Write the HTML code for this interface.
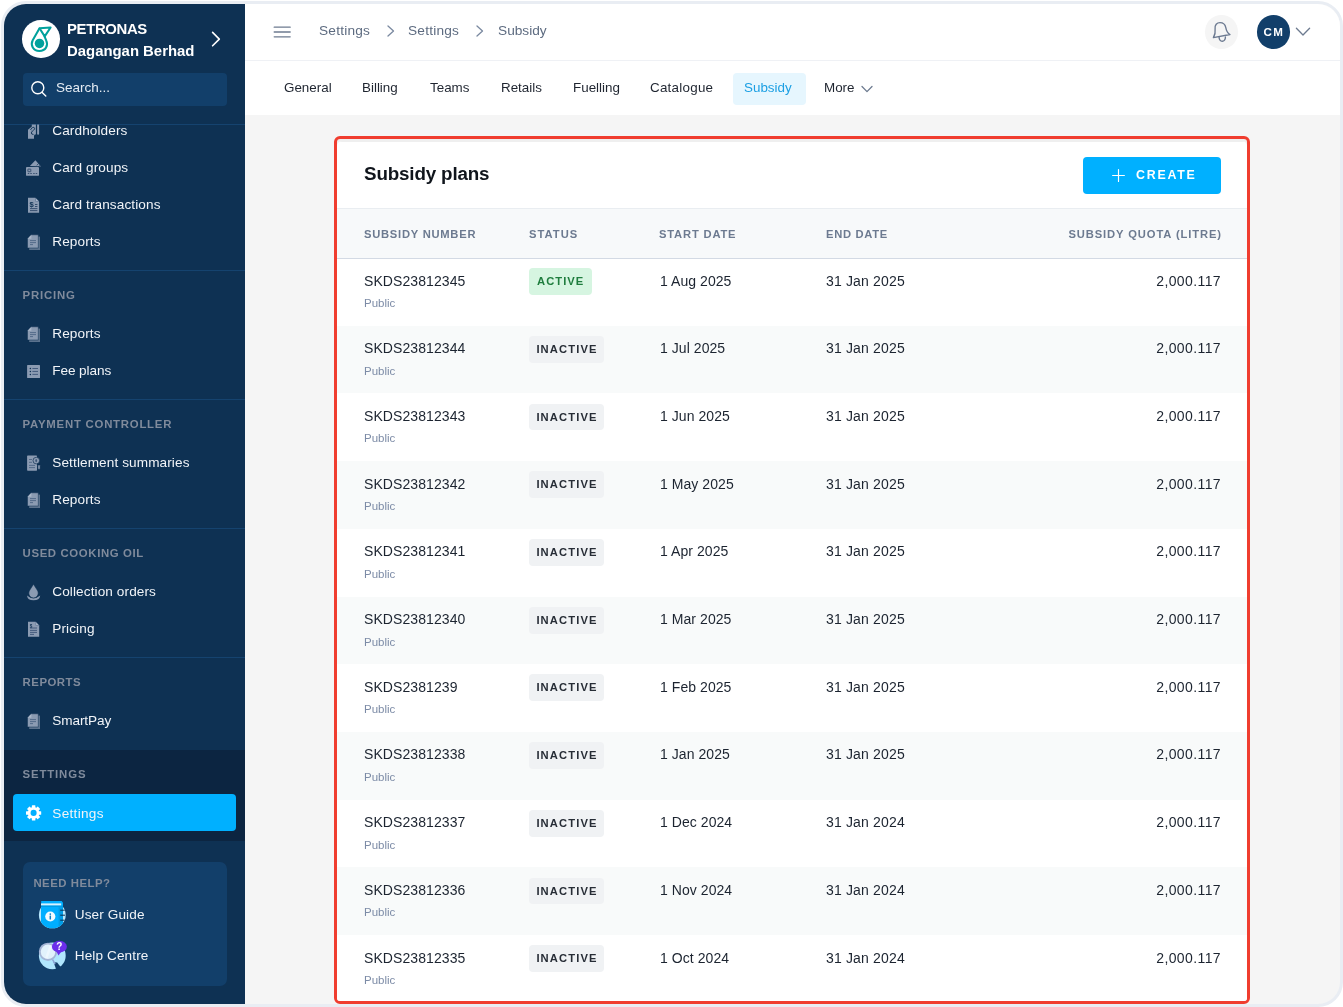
<!DOCTYPE html>
<html lang="en">
<head>
<meta charset="utf-8">
<title>Subsidy plans</title>
<style>
*{box-sizing:border-box;margin:0;padding:0}
html,body{width:1343px;height:1007px;overflow:hidden;background:#fff}
body{font-family:"Liberation Sans",sans-serif;color:#1c2430;position:relative}
.frame{position:absolute;left:1px;top:1px;width:1342px;height:1006px;border:3px solid #e9edf3;border-radius:25px;overflow:hidden;background:#f5f5f5}
.page{position:absolute;left:-4px;top:-4px;width:1343px;height:1007px;will-change:transform}
.abs{position:absolute}
.t{position:absolute;white-space:nowrap;line-height:20px;height:20px;margin-top:-10px}
/* sidebar */
.side{position:absolute;left:4px;top:4px;width:241px;height:1000px;background:#0e3153}
.sep{position:absolute;left:4px;width:241px;height:1px;background:#15436f}
.lab{font-size:11.4px;font-weight:700;letter-spacing:.95px;color:#808b9c;left:22.6px}
.it{font-size:13.6px;letter-spacing:.1px;color:#f1f4f8;left:52.3px;margin-top:-9.6px}
.ico{position:absolute;left:25px;width:16px;height:16px;margin-top:-8px}
.brand{font-size:14.9px;font-weight:700;color:#fff}
/* main */
.hdr{position:absolute;left:245px;top:4px;width:1095px;height:57px;background:#fff;border-bottom:1px solid #eff1f5}
.tabs{position:absolute;left:245px;top:61px;width:1095px;height:54px;background:#fff}
.bc{font-size:13.7px;letter-spacing:.2px;color:#5d6b80;margin-top:-10.7px}
.tab{font-size:13.4px;color:#1f2530;margin-top:-10.3px}

.card{position:absolute;left:334px;top:136px;width:916px;height:868px;border:3px solid #f03d2f;border-radius:6px;background:#efefef;overflow:hidden}
.cin{position:absolute;left:0;top:2px;width:910px;height:870px;background:#fff;border-radius:5px 5px 0 0;overflow:hidden}
.th{font-size:11.2px;font-weight:700;letter-spacing:1.02px;color:#6c7a90;margin-top:-10.4px}
.row{position:absolute;left:0;width:910px;height:67.7px}
.row.alt{background:#f8fafa}
.c1{font-size:14px;color:#1c2430;letter-spacing:.08px;margin-top:-11px}
.sub{font-size:11.5px;color:#7c8ba6;margin-top:-11px}
.c{font-size:14px;color:#1c2430;letter-spacing:.06px;margin-top:-11px}
.e{letter-spacing:.16px}
.q{letter-spacing:.39px}
.bdg{position:absolute;left:192px;top:10.3px;height:26.8px;border-radius:4px;background:#f0f2f4;color:#272d36;font-size:11.2px;font-weight:700;letter-spacing:1.12px;line-height:26.8px;padding:0 0 0 7.4px;white-space:nowrap}
.bdg.on{background:#d6f5e1;color:#1f7d3e;letter-spacing:1.05px;padding-left:8px}
</style>
</head>
<body>
<div class="frame"><div class="page">

<!-- SIDEBAR -->

<div class="side"></div>
<!-- brand -->
<div class="abs" style="left:22.4px;top:20.3px;width:37.6px;height:37.6px;border-radius:50%;background:#fff"></div>
<svg class="abs" style="left:29px;top:24px" width="24" height="30" viewBox="0 0 24 30">
  <path d="M10.5 4.3 L21.6 3.5 L15.7 12.4 Z" fill="none" stroke="#00a19c" stroke-width="2.05" stroke-linejoin="round"/>
  <path d="M10.4 4.6 L3.7 16.2 C1.2 21.2 4.2 26.9 10.4 26.9 C16.6 26.9 19.6 21.6 17.2 16.4 L15.6 12.6" fill="none" stroke="#00a19c" stroke-width="2.05" stroke-linecap="round" stroke-linejoin="round"/>
  <circle cx="10.5" cy="19.4" r="4.75" fill="#00a19c"/>
</svg>
<div class="t brand" style="left:67px;top:29px;letter-spacing:-0.35px">PETRONAS</div>
<div class="t brand" style="left:67px;top:50.5px">Dagangan Berhad</div>
<svg class="abs" style="left:209px;top:29px" width="14" height="20" viewBox="0 0 14 20"><path d="M3.6 3.4 L10.3 10.1 L3.6 16.8" fill="none" stroke="#fff" stroke-width="1.6" stroke-linecap="round" stroke-linejoin="round"/></svg>
<!-- search -->
<div class="abs" style="left:22.5px;top:73px;width:204px;height:32.5px;border-radius:4px;background:#123f6a"></div>
<svg class="abs" style="left:30px;top:80px" width="18" height="18" viewBox="0 0 18 18"><circle cx="7.8" cy="7.8" r="6" fill="none" stroke="#fff" stroke-width="1.4"/><path d="M12.2 12.4 L15.8 16" stroke="#fff" stroke-width="1.4" stroke-linecap="round"/></svg>
<div class="t" style="left:56px;top:88px;font-size:13.5px;color:#e4ebf3;margin-top:-10.4px">Search...</div>
<div class="sep" style="top:123.6px"></div>


<!-- nav -->
<div class="t it" style="top:130.5px">Cardholders</div>
<div class="t it" style="top:167.5px">Card groups</div>
<div class="t it" style="top:204.5px">Card transactions</div>
<div class="t it" style="top:241.5px">Reports</div>
<div class="sep" style="top:270px"></div>
<div class="t lab" style="top:295px;letter-spacing:0.8px">PRICING</div>
<div class="t it" style="top:333.5px">Reports</div>
<div class="t it" style="top:370.5px;letter-spacing:-.1px">Fee plans</div>
<div class="sep" style="top:399px"></div>
<div class="t lab" style="top:424px;letter-spacing:0.75px">PAYMENT CONTROLLER</div>
<div class="t it" style="top:462.5px">Settlement summaries</div>
<div class="t it" style="top:499.5px">Reports</div>
<div class="sep" style="top:528px"></div>
<div class="t lab" style="top:553px;letter-spacing:0.62px">USED COOKING OIL</div>
<div class="t it" style="top:591.5px">Collection orders</div>
<div class="t it" style="top:628.5px">Pricing</div>
<div class="sep" style="top:657px"></div>
<div class="t lab" style="top:682px;letter-spacing:0.5px">REPORTS</div>
<div class="t it" style="top:720.5px;letter-spacing:-.1px">SmartPay</div>
<div class="abs" style="left:4px;top:750px;width:241px;height:91px;background:#0c2541"></div>
<div class="t lab" style="top:774px;letter-spacing:0.85px">SETTINGS</div>
<div class="abs" style="left:13px;top:794px;width:223px;height:37.4px;border-radius:4px;background:#00b0ff"></div>
<div class="t it" style="top:813.5px;letter-spacing:.3px">Settings</div>

<svg class="abs" style="left:0;top:0" width="250" height="1007" viewBox="0 0 250 1007">
<defs><clipPath id="scr"><rect x="4" y="124.6" width="241" height="700"/></clipPath></defs>
<g clip-path="url(#scr)">
<!-- cardholders -->
<path d="M31.8 122 H35.9 V134.2 H31.8 Z M37.1 122 H39.1 V134 Q39.1 134.7 38.1 134.7 Q37.1 134.7 37.1 134 Z" fill="#8b9bb2"/>
<path d="M28 129.7 L31.8 126.6 V134.2 H35.9 L34 135.5 V138.7 H28 Z" fill="#8b9bb2"/>
<path d="M30.6 129.4 L32.8 127.4 Q34.2 126.8 34.6 128.2 Q34.8 129.2 33.6 130.2 L31.8 131.8 Q30.8 133 31.8 134 L33 134.3" fill="none" stroke="#0e3153" stroke-width=".9" stroke-linecap="round"/>
</g>
<!-- card groups -->
<path d="M35.4 160.2 L41 166.6 L38.2 166.2 L29.9 166 Z" fill="#8b9bb2"/>
<path d="M36.7 165.3 L38.7 163.5 M38.3 166.9 L40.4 165" stroke="#0e3153" stroke-width=".7"/>
<rect x="26" y="167" width="13" height="8.8" rx=".9" fill="#8b9bb2"/>
<rect x="27.9" y="169.1" width="2.9" height="2.6" rx=".3" fill="none" stroke="#2c4668" stroke-width=".85"/>
<path d="M27.8 173.5 H29.3 M30.3 173.5 H31.8 M33.2 173.5 H34.7 M35.7 173.5 H37.2" stroke="#2c4668" stroke-width=".9"/>
<!-- card transactions -->
<path d="M28 197.8 H35.3 L39.1 201.6 V212.7 H28 Z" fill="#8b9bb2"/>
<path d="M35.3 197.8 V201.6 H39.1 Z" fill="#5f7696"/>
<path d="M35.9 198.6 L38.4 201 H35.9 Z" fill="#a9b6c8"/>
<text x="29.6" y="206.6" font-family="Liberation Sans, sans-serif" font-size="7.6" font-weight="700" fill="#0e3153">$</text>
<path d="M35 204.5 H37.4 M35 206.5 H37.4 M30 208.6 H37.4 M30 210.6 H37.4" stroke="#2c4668" stroke-width=".9"/>
<g>
<path d="M29.2 236.60000000000002 H40 V250.0 H29.2 Z" fill="#8b9bb2" opacity=".62"/>
<path d="M31.4 234.8 H38.3 V248.0 H27.5 V238.70000000000002 Z" fill="#8b9bb2" stroke="#0e3153" stroke-width=".5"/>
<path d="M27.5 238.70000000000002 H31.4 V234.8 Z" fill="#a9b6c8"/>
<path d="M30 240.60000000000002 H36 M30 242.60000000000002 H36 M30 244.60000000000002 H33" stroke="#4d6585" stroke-width=".9"/>
</g>
<g>
<path d="M29.2 328.6 H40 V342.0 H29.2 Z" fill="#8b9bb2" opacity=".62"/>
<path d="M31.4 326.8 H38.3 V340.0 H27.5 V330.7 Z" fill="#8b9bb2" stroke="#0e3153" stroke-width=".5"/>
<path d="M27.5 330.7 H31.4 V326.8 Z" fill="#a9b6c8"/>
<path d="M30 332.6 H36 M30 334.6 H36 M30 336.6 H33" stroke="#4d6585" stroke-width=".9"/>
</g>
<!-- fee plans -->
<rect x="27.1" y="365" width="12.9" height="13" rx=".5" fill="#8b9bb2"/>
<circle cx="30.4" cy="368.5" r=".75" fill="#0e3153"/><circle cx="30.4" cy="371.45" r=".75" fill="#0e3153"/><circle cx="30.4" cy="374.4" r=".75" fill="#0e3153"/>
<path d="M32.4 368.5 H38 M32.4 371.45 H38 M32.4 374.4 H38" stroke="#3c5577" stroke-width=".9"/>
<!-- settlement summaries -->
<path d="M27.8 455.6 H36.4 Q37 455.6 37 456.2 V470.1 Q37 470.7 36.4 470.7 H27.8 Q27.1 470.7 27.1 470.1 V456.2 Q27.1 455.6 27.8 455.6 Z" fill="#8b9bb2"/>
<circle cx="36.3" cy="460.6" r="3.3" fill="#8b9bb2" stroke="#0e3153" stroke-width=".7"/>
<ellipse cx="36.2" cy="460.6" rx=".9" ry="1.7" fill="#3c5577"/>
<rect x="37.9" y="465" width="2.2" height="4.2" rx=".4" fill="#8b9bb2" stroke="#0e3153" stroke-width=".5"/>
<path d="M29 459.5 H32 M29 462.3 H32 M29 465.4 H35 M29 467.6 H35" stroke="#4d6585" stroke-width=".9"/>
<g>
<path d="M29.2 494.6 H40 V508.0 H29.2 Z" fill="#8b9bb2" opacity=".62"/>
<path d="M31.4 492.8 H38.3 V506.0 H27.5 V496.7 Z" fill="#8b9bb2" stroke="#0e3153" stroke-width=".5"/>
<path d="M27.5 496.7 H31.4 V492.8 Z" fill="#a9b6c8"/>
<path d="M30 498.6 H36 M30 500.6 H36 M30 502.6 H33" stroke="#4d6585" stroke-width=".9"/>
</g>
<!-- collection orders -->
<path d="M27 595.4 Q33.5 601 40.2 595.4 Q39.6 600.2 33.5 600.3 Q27.6 600.2 27 595.4 Z" fill="#8b9bb2"/>
<path d="M33.5 584.2 L37.2 590 Q38.4 592 38.2 593.2 A4.7 4.7 0 0 1 28.8 593.2 Q28.7 592 29.8 590 Z" fill="#8b9bb2" stroke="#0e3153" stroke-width=".6"/>
<!-- pricing -->
<path d="M28 621.8 H35.6 L39.2 625.4 V636.8 H28 Z" fill="#8b9bb2"/>
<path d="M35.6 621.8 V625.4 H39.2 Z" fill="#5f7696"/>
<path d="M36.1 622.6 L38.5 624.9 H36.1 Z" fill="#a9b6c8"/>
<text x="29.8" y="627.6" font-family="Liberation Sans, sans-serif" font-size="4.6" font-weight="700" fill="#0e3153">$</text>
<path d="M30 628 H37 M30 630.4 H37 M30 632.4 H37 M30 634.4 H34" stroke="#3c5577" stroke-width=".9"/>
<g>
<path d="M29.2 715.5999999999999 H40 V729.0 H29.2 Z" fill="#8b9bb2" opacity=".62"/>
<path d="M31.4 713.8 H38.3 V727.0 H27.5 V717.6999999999999 Z" fill="#8b9bb2" stroke="#0e3153" stroke-width=".5"/>
<path d="M27.5 717.6999999999999 H31.4 V713.8 Z" fill="#a9b6c8"/>
<path d="M30 719.5999999999999 H36 M30 721.5999999999999 H36 M30 723.5999999999999 H33" stroke="#4d6585" stroke-width=".9"/>
</g>
<!-- settings gear -->
<g transform="translate(33.6 812.9)" fill="#fff">
<circle r="5.8"/>
<g id="tt"><rect x="-1.75" y="-7.6" width="3.5" height="15.2" rx=".5"/><rect x="-7.6" y="-1.75" width="15.2" height="3.5" rx=".5"/></g>
<g transform="rotate(45)"><rect x="-1.75" y="-7.5" width="3.5" height="15" rx=".5"/><rect x="-7.5" y="-1.75" width="15" height="3.5" rx=".5"/></g>
<circle r="3.05" fill="#00b0ff"/>
</g>
</svg>
<!-- help -->
<div class="abs" style="left:22.5px;top:861.5px;width:204px;height:124px;border-radius:7px;background:#123f6a"></div>

<svg class="abs" style="left:36px;top:898px" width="34" height="76" viewBox="36 898 34 76">
<defs>
<clipPath id="ug"><path d="M38 898 H68 V930 H38 Z"/></clipPath>
<clipPath id="ugc"><circle cx="52.3" cy="914.9" r="13.4"/></clipPath>
</defs>
<!-- user guide -->
<circle cx="52.3" cy="914.9" r="13.4" fill="#b7e7fd"/>
<g clip-path="url(#ugc)">
<rect x="41" y="906" width="22" height="24" fill="#00aeff"/>
<rect x="58.6" y="906" width="4.4" height="24" fill="#009ce6"/>
</g>
<path d="M41.2 901 H61.6 L63 902.6 V907.2 H41.2 Z" fill="#00aeff"/>
<rect x="41" y="903.4" width="20.2" height="2.1" fill="#d8f2ff"/>
<rect x="41.2" y="905.6" width="21.8" height="1.3" fill="#0091d6" opacity=".7"/>
<path d="M60.6 910.2 H64.4 M60.6 915.2 H64.6 M60.6 920.2 H64.2" stroke="#0c3050" stroke-width="1" stroke-linecap="round"/>
<circle cx="50.3" cy="916.5" r="5.1" fill="#f2fbff"/>
<circle cx="50.3" cy="914.1" r=".85" fill="#0a7ec4"/>
<rect x="49.55" y="915.6" width="1.5" height="3.9" rx=".3" fill="#0a7ec4"/>
<!-- help centre -->
<circle cx="52.3" cy="955.8" r="13.4" fill="#b0e6fd"/>
<path d="M53.6 962.2 L56.2 969.6 L61 967.4 L57.2 962.4 Z" fill="#123f6a"/>
<path d="M52.8 959.8 L54.8 963.6" stroke="#8ea6d6" stroke-width="1.5" stroke-linecap="round"/>
<circle cx="48" cy="951.8" r="8.2" fill="#e2f2fc" stroke="#a5b5d6" stroke-width="1.9"/>
<path d="M45 958 L49.5 945.5 L52 945.8 L47.5 958.6 Z" fill="#f0f8fe" opacity=".8"/>
<ellipse cx="59.4" cy="946.7" rx="7.5" ry="5.9" fill="#6b2eea"/>
<path d="M56.4 951.6 L58.5 955.4 L61 952 Z" fill="#6b2eea"/>
<text x="59.4" y="950.4" text-anchor="middle" font-family="Liberation Sans, sans-serif" font-size="10" font-weight="700" fill="#fff">?</text>
</svg>
<div class="t lab" style="left:33.4px;top:883px;letter-spacing:.5px">NEED HELP?</div>
<div class="t it" style="left:74.8px;top:914.5px">User Guide</div>
<div class="t it" style="left:74.8px;top:955.5px">Help Centre</div>

<!-- HEADER -->
<div class="hdr"></div>
<svg class="abs" style="left:273px;top:24px" width="19" height="15" viewBox="0 0 19 15"><path d="M1.2 3.2 H17.2 M1.2 8 H17.2 M1.2 12.8 H17.2" stroke="#6d7b90" stroke-width="1.3" stroke-linecap="round"/></svg>
<div class="t bc" style="left:319px;top:31.5px">Settings</div>
<svg class="abs chev" style="left:385px;top:23px" width="12" height="16" viewBox="0 0 12 16"><path d="M3 3 L8.5 8 L3 13" fill="none" stroke="#7a89a0" stroke-width="1.3" stroke-linecap="round" stroke-linejoin="round"/></svg>
<div class="t bc" style="left:408px;top:31.5px">Settings</div>
<svg class="abs chev" style="left:474px;top:23px" width="12" height="16" viewBox="0 0 12 16"><path d="M3 3 L8.5 8 L3 13" fill="none" stroke="#7a89a0" stroke-width="1.3" stroke-linecap="round" stroke-linejoin="round"/></svg>
<div class="t bc" style="left:498px;top:31.5px;letter-spacing:0">Subsidy</div>
<!-- bell -->
<div class="abs" style="left:1204.5px;top:15px;width:33.5px;height:33.5px;border-radius:50%;background:#f5f5f5"></div>
<svg class="abs" style="left:1211px;top:20px" width="21" height="23" viewBox="0 0 21 23"><path d="M2.4 17.6 C3.8 15.2 4.5 12 4.1 9 C3.5 4.8 6 2.6 9 2.6 C12.2 2.6 14.2 4.6 14.8 7.6 C15.4 11 16.6 13.2 19 14.5 Z" fill="none" stroke="#6b7990" stroke-width="1.35" stroke-linejoin="round"/><path d="M8.1 17.2 C8 19.6 9.4 21.2 11.2 21.2 C13 21.2 14.5 19.6 14.4 16.9" fill="none" stroke="#6b7990" stroke-width="1.35" stroke-linecap="round"/></svg>
<!-- avatar -->
<div class="abs" style="left:1256.5px;top:15px;width:33.5px;height:33.5px;border-radius:50%;background:#123f6a"></div>
<div class="t" style="left:1256.5px;width:33.5px;text-align:center;top:32px;font-size:11.6px;font-weight:700;letter-spacing:1.3px;color:#fff;padding-left:1.3px">CM</div>
<svg class="abs" style="left:1294px;top:25px" width="18" height="14" viewBox="0 0 18 14"><path d="M2.4 3.2 L9 10 L15.6 3.2" fill="none" stroke="#6d7b90" stroke-width="1.3" stroke-linecap="round" stroke-linejoin="round"/></svg>

<!-- TABS -->
<div class="tabs"></div>
<div class="abs" style="left:733px;top:72.5px;width:73px;height:32.5px;border-radius:4px;background:#e6f6fe"></div>
<div class="t tab" style="left:284px;top:88.5px">General</div>
<div class="t tab" style="left:362px;top:88.5px">Billing</div>
<div class="t tab" style="left:430px;top:88.5px">Teams</div>
<div class="t tab" style="left:501px;top:88.5px">Retails</div>
<div class="t tab" style="left:573px;top:88.5px">Fuelling</div>
<div class="t tab" style="left:650px;top:88.5px;letter-spacing:.25px">Catalogue</div>
<div class="t tab" style="left:744px;top:88.5px;color:#1b9fe3">Subsidy</div>
<div class="t tab" style="left:824px;top:88.5px">More</div>
<svg class="abs" style="left:859px;top:82px" width="16" height="14" viewBox="0 0 16 14"><path d="M3 4.5 L8 9.6 L13 4.5" fill="none" stroke="#6d7b90" stroke-width="1.3" stroke-linecap="round" stroke-linejoin="round"/></svg>

<!-- CARD -->
<div class="card"><div class="cin"><div class="abs" style="left:0;top:0;width:910px;height:.7px;background:#efefef"></div>
<div class="t" style="left:27px;top:34.5px;font-size:18.8px;font-weight:700;color:#10151c;letter-spacing:-.15px;margin-top:-11.2px">Subsidy plans</div>
<div class="abs" style="left:746px;top:16px;width:138px;height:37px;border-radius:4px;background:#00b0ff"></div>
<svg class="abs" style="left:774px;top:27px" width="15" height="15" viewBox="0 0 15 15"><path d="M7.5 1.6 V13.4 M1.6 7.5 H13.4" stroke="#fff" stroke-width="1.15" stroke-linecap="round"/></svg>
<div class="t" style="left:799px;top:34.5px;font-size:12.4px;font-weight:700;letter-spacing:1.75px;color:#fff;margin-top:-10.7px">CREATE</div>
<div class="abs" style="left:0;top:67px;width:910px;height:51px;background:#f7f9fa;border-top:1px solid #e9edf1;border-bottom:1.5px solid #d3dae4"></div>
<div class="t th" style="left:27px;top:93px;letter-spacing:.75px">SUBSIDY NUMBER</div>
<div class="t th" style="left:192px;top:93px">STATUS</div>
<div class="t th" style="left:322px;top:93px;letter-spacing:.82px">START DATE</div>
<div class="t th" style="left:489px;top:93px;letter-spacing:.71px">END DATE</div>
<div class="t th" style="right:25px;top:93px;letter-spacing:.9px;margin-right:0px">SUBSIDY QUOTA (LITRE)</div>
<div class="row" style="top:117.0px"><div class="t c1" style="left:27px;top:23.5px">SKDS23812345</div><div class="t sub" style="left:27px;top:46px">Public</div><div class="bdg on" style="width:63px">ACTIVE</div><div class="t c" style="left:323px;top:23.5px">1 Aug 2025</div><div class="t c e" style="left:489px;top:23.5px">31 Jan 2025</div><div class="t c q" style="right:26px;top:23.5px">2,000.117</div></div>
<div class="row alt" style="top:184.7px"><div class="t c1" style="left:27px;top:23.5px">SKDS23812344</div><div class="t sub" style="left:27px;top:46px">Public</div><div class="bdg" style="width:75px">INACTIVE</div><div class="t c" style="left:323px;top:23.5px">1 Jul 2025</div><div class="t c e" style="left:489px;top:23.5px">31 Jan 2025</div><div class="t c q" style="right:26px;top:23.5px">2,000.117</div></div>
<div class="row" style="top:252.4px"><div class="t c1" style="left:27px;top:23.5px">SKDS23812343</div><div class="t sub" style="left:27px;top:46px">Public</div><div class="bdg" style="width:75px">INACTIVE</div><div class="t c" style="left:323px;top:23.5px">1 Jun 2025</div><div class="t c e" style="left:489px;top:23.5px">31 Jan 2025</div><div class="t c q" style="right:26px;top:23.5px">2,000.117</div></div>
<div class="row alt" style="top:320.1px"><div class="t c1" style="left:27px;top:23.5px">SKDS23812342</div><div class="t sub" style="left:27px;top:46px">Public</div><div class="bdg" style="width:75px">INACTIVE</div><div class="t c" style="left:323px;top:23.5px">1 May 2025</div><div class="t c e" style="left:489px;top:23.5px">31 Jan 2025</div><div class="t c q" style="right:26px;top:23.5px">2,000.117</div></div>
<div class="row" style="top:387.8px"><div class="t c1" style="left:27px;top:23.5px">SKDS23812341</div><div class="t sub" style="left:27px;top:46px">Public</div><div class="bdg" style="width:75px">INACTIVE</div><div class="t c" style="left:323px;top:23.5px">1 Apr 2025</div><div class="t c e" style="left:489px;top:23.5px">31 Jan 2025</div><div class="t c q" style="right:26px;top:23.5px">2,000.117</div></div>
<div class="row alt" style="top:455.5px"><div class="t c1" style="left:27px;top:23.5px">SKDS23812340</div><div class="t sub" style="left:27px;top:46px">Public</div><div class="bdg" style="width:75px">INACTIVE</div><div class="t c" style="left:323px;top:23.5px">1 Mar 2025</div><div class="t c e" style="left:489px;top:23.5px">31 Jan 2025</div><div class="t c q" style="right:26px;top:23.5px">2,000.117</div></div>
<div class="row" style="top:523.2px"><div class="t c1" style="left:27px;top:23.5px">SKDS2381239</div><div class="t sub" style="left:27px;top:46px">Public</div><div class="bdg" style="width:75px">INACTIVE</div><div class="t c" style="left:323px;top:23.5px">1 Feb 2025</div><div class="t c e" style="left:489px;top:23.5px">31 Jan 2025</div><div class="t c q" style="right:26px;top:23.5px">2,000.117</div></div>
<div class="row alt" style="top:590.9px"><div class="t c1" style="left:27px;top:23.5px">SKDS23812338</div><div class="t sub" style="left:27px;top:46px">Public</div><div class="bdg" style="width:75px">INACTIVE</div><div class="t c" style="left:323px;top:23.5px">1 Jan 2025</div><div class="t c e" style="left:489px;top:23.5px">31 Jan 2025</div><div class="t c q" style="right:26px;top:23.5px">2,000.117</div></div>
<div class="row" style="top:658.6px"><div class="t c1" style="left:27px;top:23.5px">SKDS23812337</div><div class="t sub" style="left:27px;top:46px">Public</div><div class="bdg" style="width:75px">INACTIVE</div><div class="t c" style="left:323px;top:23.5px">1 Dec 2024</div><div class="t c e" style="left:489px;top:23.5px">31 Jan 2024</div><div class="t c q" style="right:26px;top:23.5px">2,000.117</div></div>
<div class="row alt" style="top:726.3px"><div class="t c1" style="left:27px;top:23.5px">SKDS23812336</div><div class="t sub" style="left:27px;top:46px">Public</div><div class="bdg" style="width:75px">INACTIVE</div><div class="t c" style="left:323px;top:23.5px">1 Nov 2024</div><div class="t c e" style="left:489px;top:23.5px">31 Jan 2024</div><div class="t c q" style="right:26px;top:23.5px">2,000.117</div></div>
<div class="row" style="top:794.0px"><div class="t c1" style="left:27px;top:23.5px">SKDS23812335</div><div class="t sub" style="left:27px;top:46px">Public</div><div class="bdg" style="width:75px">INACTIVE</div><div class="t c" style="left:323px;top:23.5px">1 Oct 2024</div><div class="t c e" style="left:489px;top:23.5px">31 Jan 2024</div><div class="t c q" style="right:26px;top:23.5px">2,000.117</div></div>
</div></div>

</div></div>
</body>
</html>
